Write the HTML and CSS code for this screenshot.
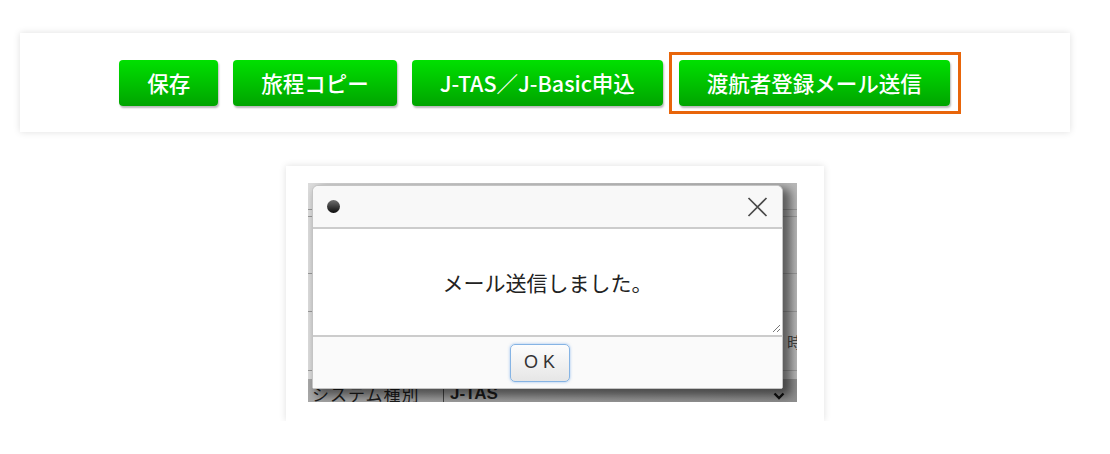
FILE: index.html
```html
<!DOCTYPE html>
<html lang="ja">
<head>
  <meta charset="UTF-8">
  <title>渡航者登録メール送信</title>
  <link rel="stylesheet" href="styles.css">
</head>
<body>

<div class="toolbar">
  <button class="btn">保存</button>
  <button class="btn">旅程コピー</button>
  <button class="btn">J-TAS／J-Basic申込</button>
  <div class="highlight">
    <button class="btn">渡航者登録メール送信</button>
  </div>
</div>

<div class="shot">
  <div class="backdrop">
    <div class="bg-row h27"></div>
    <div class="bg-row h6"></div>
    <div class="bg-row h57"></div>
    <div class="bg-row h37"></div>
    <div class="bg-row h58"><span class="bg-label">時</span></div>
    <div class="bg-row h10 last"></div>
    <div class="bg-bottom">
      <span class="bg-name">システム種別</span>
      <span class="bg-sep"></span>
      <span class="bg-value">J-TAS</span>
      <svg class="bg-chevron" width="12" height="8" viewBox="0 0 12 8">
        <path d="M1.5 1.5 L6 6 L10.5 1.5" fill="none" stroke="#111" stroke-width="2.4"/>
      </svg>
    </div>

    <div class="dialog">
      <div class="dialog-head">
        <span class="dot"></span>
        <svg class="close" width="21" height="20" viewBox="0 0 21 20">
          <path d="M1.5 1 L19.5 19 M19.5 1 L1.5 19" stroke="#4a4a4a" stroke-width="1.7" fill="none"/>
        </svg>
      </div>
      <div class="dialog-body">
        メール送信しました。
        <svg class="grip" width="9" height="9" viewBox="0 0 9 9">
          <path d="M1 8 L8 1 M5 8 L8 5" stroke="#777" stroke-width="1" fill="none"/>
        </svg>
      </div>
      <div class="dialog-foot">
        <button class="ok">OK</button>
      </div>
    </div>
  </div>
</div>

</body>
</html>
```

FILE: styles.css
```css
body {
  margin: 0;
  background-color: #fff;
  font-family: "Noto Sans CJK JP", "Liberation Sans", sans-serif;
}
.toolbar {
  display: flex;
  align-items: center;
  justify-content: center;
  gap: 15px;
  width: 1050px;
  height: 99px;
  margin: 33px 0 0 20px;
  padding-right: 10px;
  box-sizing: border-box;
  background-color: #fff;
  box-shadow: 0 0 7px rgba(0, 0, 0, 0.13);
}
.btn {
  height: 46px;
  padding: 0 28px;
  border: none;
  border-radius: 4px;
  background: linear-gradient(#00e000, #00a400);
  box-shadow: 1px 2px 2px rgba(0, 0, 0, 0.28);
  color: #fff;
  font-family: "Noto Sans CJK JP", sans-serif;
  font-size: 21.5px;
  font-weight: 500;
  white-space: nowrap;
}
.highlight {
  margin-left: -9px;
  padding: 5px 8px 5px 7px;
  border: 3px solid #e8650a;
}
.shot {
  width: 538px;
  margin: 34px auto 0;
  padding: 17px 27px 19px 22px;
  box-sizing: border-box;
  background-color: #fff;
  box-shadow: 0 0 7px rgba(0, 0, 0, 0.13);
}
.backdrop {
  position: relative;
  display: flex;
  flex-direction: column;
  width: 489px;
  height: 219px;
  overflow: hidden;
  background: linear-gradient(90deg, #dcdcdc, #b8b8b8);
}
.bg-row {
  display: flex;
  justify-content: flex-end;
  align-items: center;
  border-bottom: 1px solid #9a9a9a;
}
.h27 { height: 26px; }
.h6 { height: 6px; }
.h57 { height: 56px; }
.h37 { height: 37px; }
.h58 { height: 58px; }
.h10 { height: 8px; }
.bg-row.last { border-bottom: none; }
.bg-label {
  margin-right: -5px;
  font-size: 15px;
  color: #444;
}
.bg-bottom {
  position: relative;
  display: flex;
  align-items: flex-end;
  flex: 1;
  padding-left: 4px;
  background: linear-gradient(90deg, #a8a8a8, #8e8e8e);
  font-size: 17px;
  line-height: 17px;
  color: #1c1c1c;
}
.bg-name {
  width: 131px;
  letter-spacing: 1px;
}
.bg-sep {
  width: 1px;
  height: 14px;
  margin-right: 6px;
  background-color: #444;
}
.bg-value {
  font-family: "Liberation Sans", sans-serif;
  font-weight: bold;
}
.bg-chevron {
  position: absolute;
  right: 12px;
  bottom: 2px;
}
.dialog {
  position: absolute;
  left: 4px;
  top: 2px;
  display: flex;
  flex-direction: column;
  width: 471px;
  height: 204px;
  box-sizing: border-box;
  border: 1px solid #c4c4c4;
  border-radius: 6px 6px 2px 2px;
  background-color: #fff;
  box-shadow: 6px 5px 10px 2px rgba(0, 0, 0, 0.5);
}
.dialog-head {
  display: flex;
  align-items: center;
  justify-content: space-between;
  height: 41px;
  padding: 0 14px;
  border-bottom: 2px solid #cccccc;
  border-radius: 6px 6px 0 0;
  background-color: #f8f8f8;
}
.dot {
  width: 13px;
  height: 13px;
  border-radius: 50%;
  background: linear-gradient(#707070, #0c0c0c);
}
.dialog-body {
  position: relative;
  display: flex;
  align-items: center;
  justify-content: center;
  height: 106px;
  font-size: 21px;
  color: #222;
}
.grip {
  position: absolute;
  right: 1px;
  bottom: 2px;
}
.dialog-foot {
  display: flex;
  align-items: center;
  justify-content: center;
  flex: 1;
  padding-right: 15px;
  border-top: 2px solid #cccccc;
  background-color: #fafafa;
}
.ok {
  width: 60px;
  height: 38px;
  padding: 0 0 0 4px;
  border: 1px solid #86b4e4;
  border-radius: 5px;
  background: linear-gradient(#fdfdfd, #e6e6e6);
  box-shadow: 0 0 3px rgba(70, 140, 230, 0.55);
  color: #333;
  font-family: "Liberation Sans", sans-serif;
  font-size: 18px;
  letter-spacing: 5px;
}
```
